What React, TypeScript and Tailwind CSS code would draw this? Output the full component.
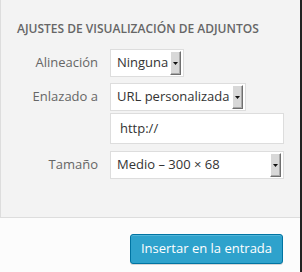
import React from 'react';

const font = { fontFamily: '"Open Sans", "Liberation Sans", sans-serif' };

const Arrow = () => (
  <span className="my-[1px] mr-[2px] ml-[2px] flex w-[11px] shrink-0 items-center justify-center border-t border-l border-r border-b border-t-white border-l-white border-r-[#6f6f6f] border-b-[#6f6f6f] bg-[#d8d8d8] shadow-[inset_-1px_-1px_0_#a8a8a8]">
    <svg width="5" height="3" viewBox="0 0 5 3">
      <path d="M0 0h5L2.5 3z" fill="#111" />
    </svg>
  </span>
);

const Select: React.FC<{ value: string; full?: boolean }> = ({ value, full }) => (
  <div
    className={`flex h-[28px] items-stretch border border-[#dddddd] bg-white text-[13px] text-[#333] ${
      full ? 'w-[174px]' : 'w-fit'
    }`}
  >
    <span className="flex flex-1 items-center whitespace-nowrap pl-[6px]">{value}</span>
    <Arrow />
  </div>
);

export default function App() {
  return (
    <div className="flex h-[272px] w-[302px] bg-[#222]" style={font}>
      <div className="flex w-[300px] flex-col bg-[#fcfcfc]">
        <div className="h-[218px] border-l border-b border-[#dddddd] bg-[#f3f3f3] pl-[16px] pt-[21px]">
          <h2 className="text-[12px] font-semibold uppercase leading-[16px] text-[#666]">
            Ajustes de visualización de adjuntos
          </h2>

          <div className="mt-[12px] flex flex-col">
            <div className="flex items-center">
              <label className="w-[81px] text-right text-[13px] text-[#666]">Alineación</label>
              <div className="ml-[12px]">
                <Select value="Ninguna" />
              </div>
            </div>

            <div className="mt-[6px] flex items-center">
              <label className="w-[81px] text-right text-[13px] text-[#666]">Enlazado a</label>
              <div className="ml-[12px]">
                <Select value="URL personalizada" />
              </div>
            </div>

            <div className="mt-[2px] flex">
              <div className="ml-[93px] flex h-[31px] w-[174px] items-center border border-[#dddddd] bg-white pl-[9px] text-[13px] text-[#333]">
                http://
              </div>
            </div>

            <div className="mt-[7px] flex items-center">
              <label className="w-[81px] text-right text-[13px] text-[#666]">Tamaño</label>
              <div className="ml-[12px]">
                <Select value="Medio – 300 × 68" full />
              </div>
            </div>
          </div>
        </div>

        <div className="flex flex-1 justify-end pr-[17px] pt-[16px]">
          <button className="h-[30px] w-[153px] rounded-[3px] border border-[#0074a2] bg-[#2ea2cc] text-[13px] text-white shadow-[inset_0_1px_0_rgba(120,200,230,0.5),0_1px_0_rgba(0,0,0,0.15)]">
            Insertar en la entrada
          </button>
        </div>
      </div>
    </div>
  );
}
